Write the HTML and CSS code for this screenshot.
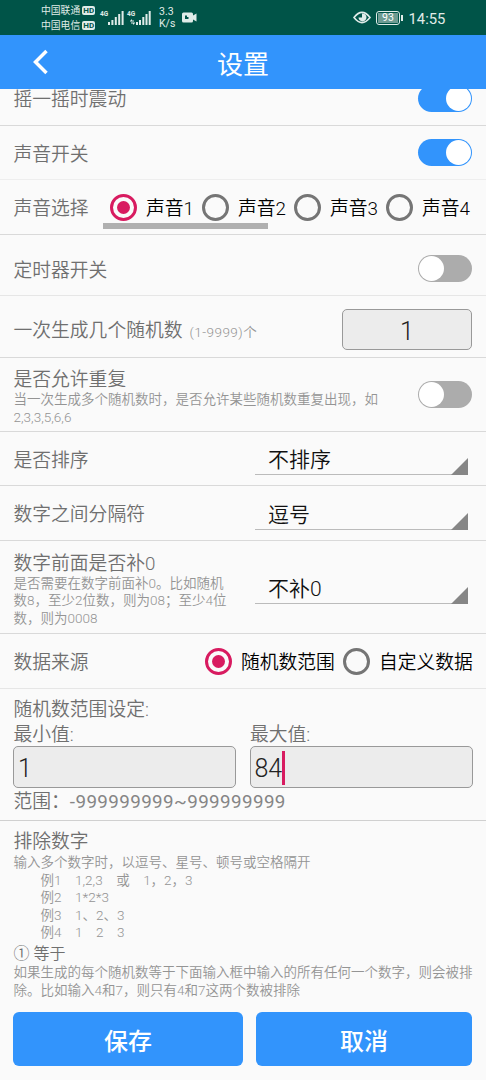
FILE: index.html
```html
<!DOCTYPE html>
<html lang="zh-CN">
<head>
<meta charset="utf-8">
<title>设置</title>
<link rel="stylesheet" href="styles.css">
</head>
<body>
<div class="screen">
  <div class="status">
    <div class="carriers">
      <div class="carrier">中国联通<b class="hd">HD</b></div>
      <div class="carrier">中国电信<b class="hd">HD</b></div>
    </div>
    <div class="signal"><span class="gen">4G</span>
      <svg width="16" height="15" viewBox="0 0 16 15"><path d="M0 12h2v3H0zM3.4 10h2v5h-2zM6.8 7h2v8h-2zM10.2 4h2v11h-2zM13.6 1h2v14h-2z"/></svg></div>
    <div class="signal second"><span class="gen">4G</span>
      <svg width="21" height="15" viewBox="0 0 21 15"><path d="M0 11l2-2v1.400h2v1H0zM5 13l-2 2v-1.400H1v-1h4zM6 12h2v3H6zM9 10h2v5H9zM12.300 7h2v8h-2zM15.500 4h2v11h-2zM18.700 1h2v14h-2z"/></svg></div>
    <div class="speed"><span>3.3</span><span>K/s</span></div>
    <svg class="cam" width="15" height="11" viewBox="0 0 15 11"><path fill-rule="evenodd" d="M1.500 .5h8Q11 .5 11 2v1.500l3.500-2v8L11 7.500V9q0 1.500-1.500 1.500h-8Q0 10.500 0 9V2Q0 .5 1.500 .5zM3 3.500v3.500h3.500V5H5V3.500z"/></svg>
    <svg class="eye" width="18" height="13" viewBox="0 0 18 13"><path d="M1 6.500Q9-3.800 17 6.500Q9 16.800 1 6.500z" fill="none" stroke="#e0ece9" stroke-width="1.600"/><path d="M9 2.500v4H5.500A4 4 0 1 0 9 2.500z"/></svg>
    <div class="battery"><span>93</span></div><i class="nub"></i>
    <div class="clock">14:55</div>
  </div>
  <header class="header">
    <svg class="back" width="18" height="28" viewBox="0 0 18 28"><path d="M15.500 3L4.500 14l11 11" /></svg>
    <h1>设置</h1>
  </header>

  <main class="settings">
    <div class="row shake"><span class="label">摇一摇时震动</span><i class="switch on"></i></div>
    <div class="row sound"><span class="label">声音开关</span><i class="switch on"></i></div>
    <div class="row choice">
      <span class="label">声音选择</span>
      <div class="sounds">
        <span class="radio"><i class="dot picked"></i><span>声音1</span></span>
        <span class="radio"><i class="dot"></i><span>声音2</span></span>
        <span class="radio"><i class="dot"></i><span>声音3</span></span>
        <span class="radio"><i class="dot"></i><span>声音4</span></span>
        <i class="bar"></i>
      </div>
    </div>
    <div class="row timer"><span class="label">定时器开关</span><i class="switch"></i></div>
    <div class="row count"><span class="label">一次生成几个随机数<small class="unit">(1-9999)个</small></span><div class="field number">1</div></div>
    <div class="row repeat">
      <div><div class="label">是否允许重复</div><p class="note">当一次生成多个随机数时，是否允许某些随机数重复出现，如<br>2,3,3,5,6,6</p></div>
      <i class="switch"></i>
    </div>
    <div class="row sort"><span class="label">是否排序</span><div class="select">不排序</div></div>
    <div class="row separator"><span class="label">数字之间分隔符</span><div class="select">逗号</div></div>
    <div class="row pad">
      <div><div class="label">数字前面是否补0</div><p class="note">是否需要在数字前面补0。比如随机<br>数8，至少2位数，则为08；至少4位<br>数，则为0008</p></div>
      <div class="select">不补0</div>
    </div>
    <div class="row source"><span class="label">数据来源</span>
      <div class="sources"><span class="radio"><i class="dot picked"></i><span>随机数范围</span></span><span class="radio"><i class="dot"></i><span>自定义数据</span></span></div>
    </div>
    <div class="range">
      <div class="label">随机数范围设定:</div>
      <div class="limits">
        <div><div class="label">最小值:</div><div class="field">1</div></div>
        <div><div class="label">最大值:</div><div class="field">84<i class="caret"></i></div></div>
      </div>
      <div class="label span">范围：<span class="digits">-999999999~999999999</span></div>
    </div>
    <div class="exclude">
      <div class="label">排除数字</div>
      <p class="note">输入多个数字时，以逗号、星号、顿号或空格隔开
　　例1　1,2,3　或　1，2，3
　　例2　1*2*3
　　例3　1、2、3
　　例4　1　2　3</p>
      <div class="rule">① 等于</div>
      <p class="note">如果生成的每个随机数等于下面输入框中输入的所有任何一个数字，则会被排
除。比如输入4和7，则只有4和7这两个数被排除</p>
    </div>
  </main>
  <footer class="actions"><div class="button">保存</div><div class="button">取消</div></footer>
</div>
</body>
</html>
```

FILE: styles.css
```css
* { box-sizing: border-box; }
body { margin: 0; font-family: Roboto, "Noto Sans CJK SC", sans-serif; font-weight: 350; color: #6f6f6f; }
i, b { font-style: normal; }
p, h1 { margin: 0; }
.screen { width: 486px; height: 1080px; background: #fafafa; overflow: hidden; display: flex; flex-direction: column; }

.status { height: 35px; flex: none; background: #005448; color: #e0ece9; display: flex; align-items: center; padding-left: 41px; font-weight: 400; }
.status svg { fill: #e0ece9; display: block; flex: none; }
.carriers { width: 55px; flex: none; padding-top: 1px; }
.carrier { display: flex; align-items: center; gap: 2px; font-size: 9.800px; line-height: 15px; white-space: nowrap; }
.hd { width: 13px; height: 9px; border-radius: 2px; background: #e0ece9; color: #005448; font-size: 8px; line-height: 9.500px; text-align: center; }
.signal { display: flex; align-items: flex-start; margin-left: 4px; width: 24px; flex: none; }
.gen { width: 8px; font-size: 6.500px; line-height: 8px; font-weight: 700; flex: none; }
.second { width: 24px; margin-left: 3px; }
.second .gen { margin-right: -5px; }
.speed { width: 18px; margin-left: 8px; padding-top: 1px; font-size: 10.500px; line-height: 12.500px; display: flex; flex-direction: column; flex: none; }
.cam { margin-left: 5px; }
.eye { margin-left: 156px; }
.battery { width: 24px; height: 14px; margin-left: 5px; border: 1.500px solid #e0ece9; border-radius: 3px; padding: 1px; flex: none; }
.battery span { display: block; height: 10px; background: #6e9b92; color: #fff; font-size: 10.500px; line-height: 10.500px; text-align: center; }
.nub { width: 1.500px; height: 6px; margin-left: 1px; background: #e0ece9; flex: none; }
.clock { margin-left: 6px; font-size: 14.800px; padding-top: 2px; }

.header { height: 54px; flex: none; background: #3294fc; position: relative; display: flex; align-items: center; justify-content: center; color: #fff; }
.back { position: absolute; left: 31px; top: 13px; }
.back path { fill: none; stroke: #fff; stroke-width: 3.500; }
.header h1 { font-size: 26px; line-height: 38px; font-weight: 400; padding-top: 5px; }

.settings { flex: 1; min-height: 0; overflow: hidden; }
.row { display: flex; align-items: center; justify-content: space-between; padding: 0 14px 0 13.500px; border-bottom: 1px solid #d9d9d9; }
.label { font-size: 18.800px; line-height: 26px; white-space: nowrap; }
.row > .label { padding-top: 4px; }
.note { font-size: 13.500px; line-height: 17.600px; color: #949494; white-space: pre; }
.shake { height: 55px; margin-top: -18px; }
.sound { height: 54px; border-color: #eee; }
.choice { height: 55px; }
.timer { height: 61px; border-color: #e6e6e6; padding-top: 7px; }
.count { height: 62px; padding-top: 6px; }
.repeat { height: 74px; }
.repeat .label, .pad .label { padding-top: 5px; line-height: 25px; height: 28px; }
.repeat .switch { margin-top: -1px; }
.sort { height: 54px; }
.separator { height: 55px; }
.pad { height: 93px; }
.source { height: 55px; border-color: #e6e6e6; }

.switch { width: 54px; height: 27px; border-radius: 14px; background: #acacac; flex: none; display: flex; padding: 1px; }
.switch::after { content: ""; width: 25px; height: 25px; border-radius: 50%; background: #fff; }
.switch.on { background: #3294fc; justify-content: flex-end; }

.radio { display: flex; align-items: center; gap: 8px; font-size: 18.800px; line-height: 26px; color: #000; white-space: nowrap; }
.radio > span { padding-top: 4px; }
.dot { width: 27px; height: 27px; border: 3px solid #757575; border-radius: 50%; flex: none; margin-right: 1px; display: flex; align-items: center; justify-content: center; }
.picked { border-color: #d81b60; }
.picked::after { content: ""; width: 13px; height: 13px; border-radius: 50%; background: #d81b60; }
.sounds { position: relative; width: 369px; height: 54px; flex: none; display: grid; grid-template-columns: repeat(4, 92px); padding-left: 7px; }
.bar { position: absolute; left: 0; bottom: 5px; width: 165px; height: 6px; background: #b0b0b0; }
.sources { display: grid; grid-template-columns: 138px 129px; }

.field { height: 41.500px; border: 1px solid #999; border-radius: 5px; background: #ececec; color: #222; font-size: 25px; font-weight: 350; line-height: 43px; padding-left: 4px; display: flex; }
.number { width: 130px; justify-content: center; padding: 0; }
.unit { font-size: 13.500px; color: #949494; margin-left: 7px; letter-spacing: .45px; }
.select { width: 213px; height: 35px; margin-right: 4px; padding-left: 13px; border-bottom: 1px solid #bbb; color: #111; font-size: 21px; line-height: 40px; position: relative; flex: none; margin-top: -2px; }
.select::after { content: ""; position: absolute; right: 0; bottom: -1px; border-left: 17px solid transparent; border-bottom: 17px solid #868686; }

.range { height: 132px; padding: 9px 13px 0; border-bottom: 1px solid #d0d0d0; }
.range > .label { line-height: 25px; padding-left: .5px; }
.limits .label { line-height: 25px; height: 23px; padding-left: .5px; }
.limits { display: grid; grid-template-columns: 223px 223px; gap: 13.500px; }
.caret { width: 3px; height: 34px; margin-top: 4px; background: #d81b60; }
.digits { letter-spacing: .4px; font-weight: 400; color: #858585; }
.range > .span { margin-top: 1px; line-height: 27px; }
.exclude { padding: 9px 13.500px 0; }
.exclude .label { line-height: 25px; height: 24px; }
.rule { font-size: 16px; line-height: 24px; height: 22.500px; }

.actions { height: 81px; flex: none; display: grid; grid-template-columns: 230px 216px; gap: 13px; padding: 13px 14px 14px 13px; background: #fafafa; }
.button { border-radius: 6px; background: #3294fc; color: #fff; font-size: 24px; font-weight: 500; display: flex; align-items: center; justify-content: center; padding-top: 5px; line-height: 34px; }
```
